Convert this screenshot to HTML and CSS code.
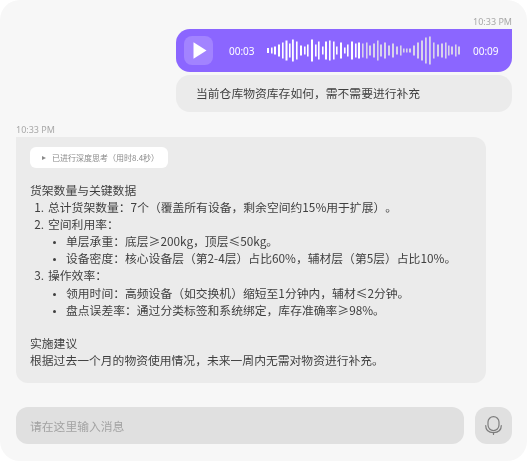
FILE: index.html
```html
<!DOCTYPE html>
<html lang="zh">
<head>
<meta charset="utf-8">
<title>Chat</title>
<link rel="stylesheet" href="styles.css">
</head>
<body>
<main class="panel">
  <section class="thread">
    <div class="msg msg-user">
      <time class="stamp">10:33 PM</time>
      <div class="voice">
        <button class="play" aria-label="播放">
          <svg width="14" height="17" viewBox="0 0 14 17"><path d="M0.500 0.300 L13.500 8.500 L0.500 16.700 Z" fill="#fff"/></svg>
        </button>
        <span class="voice-time">00:03</span>
        <svg class="wave" width="194" height="29" viewBox="0 0 194 29"><g fill="#fff"><rect x="0" y="12" width="2" height="5"/><rect x="4" y="11.500" width="1.600" height="6"/><rect x="7" y="10.500" width="2" height="8"/><rect x="11" y="8.500" width="2" height="12"/><rect x="15" y="6.500" width="1.600" height="16"/><rect x="18.500" y="4.500" width="2" height="20"/><rect x="22" y="7.500" width="1.600" height="14"/><rect x="25" y="3.500" width="1.800" height="22"/><rect x="29" y="5.500" width="1.600" height="18"/><rect x="33" y="9.500" width="2" height="10"/><rect x="37" y="10.500" width="1.600" height="8"/><rect x="40" y="8.500" width="1.600" height="12"/><rect x="44" y="3.500" width="2" height="22"/><rect x="48" y="8.500" width="1.600" height="12"/><rect x="51" y="5.500" width="1.600" height="18"/><rect x="55" y="10.500" width="1.600" height="8"/><rect x="58" y="5.500" width="2" height="18"/><rect x="62" y="4.500" width="1.600" height="20"/><rect x="66" y="5.500" width="1.600" height="18"/><rect x="69" y="10.500" width="1.600" height="8"/><rect x="73" y="6.500" width="2" height="16"/><rect x="77" y="11.500" width="1.600" height="6"/><rect x="80" y="8.500" width="1.600" height="12"/><rect x="84" y="5.500" width="2" height="18"/><rect x="88" y="7.500" width="1.600" height="14"/><rect x="91" y="6.500" width="2" height="16"/></g><g fill="#d9d3ea"><rect x="95" y="7.500" width="1.600" height="14"/><rect x="99" y="6.500" width="1.600" height="16"/><rect x="102" y="9.500" width="2" height="10"/><rect x="106" y="7.500" width="2" height="14"/><rect x="110" y="4.500" width="1.600" height="20"/><rect x="113" y="8.500" width="2" height="12"/><rect x="117" y="6.500" width="2" height="16"/><rect x="121" y="9.500" width="2" height="10"/><rect x="125" y="7.500" width="2" height="14"/><rect x="129" y="10.500" width="2" height="8"/><rect x="133" y="9.500" width="1.600" height="10"/><rect x="136" y="12.500" width="1.600" height="4"/><rect x="139" y="12.500" width="1.600" height="4"/><rect x="142" y="12.500" width="2" height="4"/><rect x="146" y="9.500" width="2" height="10"/><rect x="150" y="6.500" width="2" height="16"/><rect x="154" y="4.500" width="2" height="20"/><rect x="158" y="1.500" width="1.800" height="26"/><rect x="162" y="0.500" width="1.800" height="28"/><rect x="166" y="6.500" width="1.600" height="16"/><rect x="170" y="8.500" width="2" height="12"/><rect x="174" y="7.500" width="2" height="14"/><rect x="178" y="6.500" width="1.600" height="16"/><rect x="181" y="9.500" width="1.600" height="10"/><rect x="184" y="10.500" width="2" height="8"/><rect x="188" y="8.500" width="1.600" height="12"/><rect x="191" y="10.500" width="2" height="8"/></g></svg>
        <span class="voice-time">00:09</span>
      </div>
      <div class="transcript">当前仓库物资库存如何，需不需要进行补充</div>
    </div>

    <div class="msg msg-bot">
      <time class="stamp">10:33 PM</time>
      <div class="answer">
        <div class="think"><span class="think-arrow"></span>已进行深度思考（用时8.4秒）</div>
        <p class="line">货架数量与关键数据</p>
        <ol class="steps">
          <li>总计货架数量：7个（覆盖所有设备，剩余空间约15%用于扩展）。</li>
          <li>空间利用率：
            <ul class="points">
              <li>单层承重：底层≥200kg，顶层≤50kg。</li>
              <li>设备密度：核心设备层（第2-4层）占比60%，辅材层（第5层）占比10%。</li>
            </ul>
          </li>
          <li>操作效率：
            <ul class="points">
              <li>领用时间：高频设备（如交换机）缩短至1分钟内，辅材≤2分钟。</li>
              <li>盘点误差率：通过分类标签和系统绑定，库存准确率≥98%。</li>
            </ul>
          </li>
        </ol>
        <p class="line line-gap">实施建议</p>
        <p class="line">根据过去一个月的物资使用情况，未来一周内无需对物资进行补充。</p>
      </div>
    </div>
  </section>

  <footer class="composer">
    <div class="field">请在这里输入消息</div>
    <button class="mic" aria-label="语音">
      <svg width="17" height="19" viewBox="0 0 17 19" fill="none" stroke="#7d7d7d" stroke-width="1.200" stroke-linecap="round"><rect x="3" y="0.600" width="11" height="14" rx="5.500"/><path d="M0.700 9.500 C0.700 14 3.800 16.600 8.500 16.600 C13.200 16.600 16.300 14 16.300 9.500"/><path d="M8.500 16.600 V18.500"/></svg>
    </button>
  </footer>
</main>
</body>
</html>
```
FILE: styles.css
```css
* { box-sizing: border-box; }
html, body { margin: 0; height: 100%; background: #fff; }
body {
  font-family: "Noto Sans CJK SC", "Noto Sans", sans-serif;
  color: #3f3f3f;
  font-size: 12px;
  overflow: hidden;
  text-spacing-trim: space-all;
}
.panel {
  width: 527px;
  height: 461px;
  background: #f7f7f7;
  border-radius: 20px;
  padding: 15px 15px 17px 16px;
  display: flex;
  flex-direction: column;
  filter: blur(0.35px);
}
.thread { flex: 1; display: flex; flex-direction: column; gap: 11px; }
.msg { display: flex; flex-direction: column; }
.msg-user { align-items: flex-end; }
.msg-bot { align-items: flex-start; }
.stamp {
  font-size: 9px;
  line-height: 13px;
  color: #a8a8a8;
  font-family: "Noto Sans", sans-serif;
  margin-bottom: 1px;
}
.voice {
  width: 336px;
  height: 43px;
  background: #8b66ff;
  border-radius: 14px 0 14px 14px;
  display: flex;
  align-items: center;
  padding: 0 13px 0 8px;
  color: #fff;
}
.play {
  width: 29px;
  height: 29px;
  border: 0;
  padding: 0 0 0 2px;
  border-radius: 8px;
  background: #a283ff;
  display: flex;
  align-items: center;
  justify-content: center;
  margin-right: 16px;
}
.voice-time {
  font-family: "Noto Sans", sans-serif;
  font-size: 10px;
  line-height: 14px;
  width: 26px;
  white-space: nowrap;
}
.wave { margin: 0 auto 0 12px; display: block; flex: none; }
.transcript {
  width: 336px;
  height: 37px;
  margin-top: 3px;
  background: #ebebeb;
  border-radius: 14px;
  padding: 0 20px;
  line-height: 36px;
  font-size: 11.800px;
  white-space: nowrap;
}
.answer {
  width: 470px;
  height: 246px;
  background: #ebebeb;
  border-radius: 0 12px 12px 12px;
  padding: 10px 14px;
  font-size: 11.800px;
  line-height: 17.100px;
}
.think {
  width: 138px;
  height: 21px;
  background: #fff;
  border-radius: 6px;
  font-size: 8px;
  line-height: 21px;
  color: #8a8a8a;
  display: flex;
  align-items: center;
  padding-left: 12px;
  white-space: nowrap;
  margin-bottom: 13px;
}
.think-arrow {
  width: 0;
  height: 0;
  border-left: 4px solid #8a8a8a;
  border-top: 2.500px solid transparent;
  border-bottom: 2.500px solid transparent;
  margin-right: 6px;
}
.line { margin: 0; white-space: nowrap; }
.line-gap { margin-top: 16px; }
.steps { margin: 0; padding: 0 0 0 18px; }
.steps > li::marker { content: counter(list-item) ".\2004"; }
.points { margin: 0; padding: 0 0 0 18px; list-style: disc; }
.points li::marker { font-size: 8px; }
.composer { display: flex; gap: 11px; height: 37px; }
.field {
  flex: 1;
  background: #e0e0e0;
  border-radius: 12px;
  padding: 0 14px;
  line-height: 37px;
  font-size: 11.800px;
  color: #a3a3a3;
}
.mic {
  width: 37px;
  height: 37px;
  border: 0;
  padding: 0;
  border-radius: 12px;
  background: #e0e0e0;
  display: flex;
  align-items: center;
  justify-content: center;
}
```
